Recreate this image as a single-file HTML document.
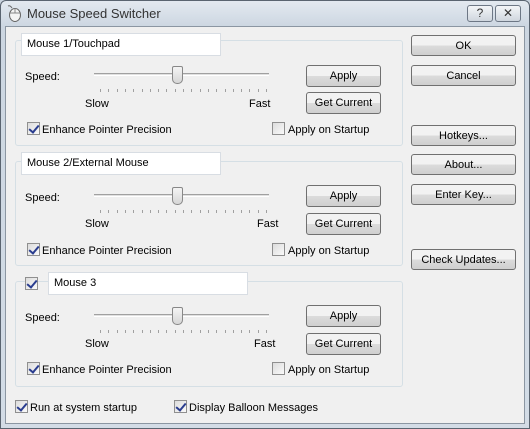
<!DOCTYPE html>
<html><head><style>
*{box-sizing:border-box;margin:0;padding:0}
body{width:530px;height:429px;overflow:hidden;background:#c9d3de;font-family:"Liberation Sans",sans-serif;font-size:11px;color:#000;position:relative}
.a{position:absolute}
.l{margin-top:2px}
.win{left:0;top:0;width:530px;height:429px;border:1px solid #5a6470;border-radius:6px 6px 0 0;background:linear-gradient(#e3e9f0,#ccd6e1 26px,#d3dce6)}
.client{left:5px;top:26px;width:520px;height:398px;background:#f0f0f0;border:1px solid #8b96a2}
.title{left:27px;top:6px;font-size:13px;color:#333}
.grp{border:1px solid #d5dfe5;border-radius:3px}
.tb{background:#fff;border:1px solid #d8dde3;padding:4px 0 0 5px;font-size:11px;height:23px}
.btn{border:1px solid #707070;border-radius:3px;background:linear-gradient(#f2f2f2 50%,#dcdcdc 50%,#cfcfcf);text-align:center;line-height:21px;height:22px}
.cb{width:13px;height:13px;border:1px solid #8f8f8f;background:linear-gradient(135deg,#dcdcdc,#fafafa)}
.cb.on::after{content:"";position:absolute;left:3px;top:0px;width:4px;height:8px;border:solid #2a3d8f;border-width:0 2px 2px 0;transform:rotate(40deg)}
.track{height:3px;border-top:1px solid #a0a0a0;border-bottom:1px solid #fff;background:#e0e0e0}
.thumb{width:11px;height:18px;border:1px solid #888;border-radius:2px 2px 5px 5px;background:linear-gradient(#f4f4f4,#d6d6d6)}
.titlebtn{border:1px solid #6d7785;border-radius:3px;background:linear-gradient(#f3f5f8,#cfd6de);text-align:center;font-size:12px;line-height:15px;color:#333}
</style></head><body>
<div class="a win"></div>
<svg class="a" style="left:7px;top:4px" width="16" height="18" viewBox="0 0 16 18"><ellipse cx="8" cy="11" rx="5.5" ry="6.5" fill="#f4f4f4" stroke="#666"/><path d="M8 4.5 V9 M3 9 H13" stroke="#888" fill="none"/><path d="M5 4 Q3 1 1 2" stroke="#666" fill="none"/></svg>
<div class="a title">Mouse Speed Switcher</div>
<div class="a titlebtn" style="left:467px;top:5px;width:26px;height:17px">?</div>
<div class="a titlebtn" style="left:495px;top:5px;width:26px;height:17px">✕</div>
<div class="a client"></div>

<!-- group 1 -->
<div class="a grp" style="left:15px;top:40px;width:388px;height:106px"></div>
<div class="a tb" style="left:21px;top:33px;width:200px">Mouse 1/Touchpad</div>
<div class="a l" style="left:25px;top:69px">Speed:</div>
<div class="a track" style="left:94px;top:73px;width:175px"></div>
<div class="a thumb" style="left:172px;top:66px"></div>
<div class="a l" style="left:85px;top:96px">Slow</div>
<div class="a l" style="left:249px;top:96px">Fast</div>
<div class="a btn" style="left:306px;top:65px;width:75px">Apply</div>
<div class="a btn" style="left:306px;top:92px;width:75px">Get Current</div>
<div class="a cb on" style="left:27px;top:122px"></div>
<div class="a l" style="left:42px;top:122px">Enhance Pointer Precision</div>
<div class="a cb" style="left:272px;top:122px"></div>
<div class="a l" style="left:288px;top:122px">Apply on Startup</div>

<!-- group 2 -->
<div class="a grp" style="left:15px;top:161px;width:388px;height:105px"></div>
<div class="a tb" style="left:21px;top:152px;width:200px">Mouse 2/External Mouse</div>
<div class="a l" style="left:25px;top:190px">Speed:</div>
<div class="a track" style="left:94px;top:194px;width:175px"></div>
<div class="a thumb" style="left:172px;top:187px"></div>
<div class="a l" style="left:85px;top:216px">Slow</div>
<div class="a l" style="left:257px;top:216px">Fast</div>
<div class="a btn" style="left:306px;top:185px;width:75px">Apply</div>
<div class="a btn" style="left:306px;top:213px;width:75px">Get Current</div>
<div class="a cb on" style="left:27px;top:243px"></div>
<div class="a l" style="left:42px;top:243px">Enhance Pointer Precision</div>
<div class="a cb" style="left:272px;top:243px"></div>
<div class="a l" style="left:288px;top:243px">Apply on Startup</div>

<!-- group 3 -->
<div class="a grp" style="left:15px;top:281px;width:388px;height:106px"></div>
<div class="a cb on" style="left:25px;top:277px"></div>
<div class="a tb" style="left:48px;top:272px;width:200px">Mouse 3</div>
<div class="a l" style="left:25px;top:310px">Speed:</div>
<div class="a track" style="left:94px;top:314px;width:175px"></div>
<div class="a thumb" style="left:172px;top:307px"></div>
<div class="a l" style="left:85px;top:336px">Slow</div>
<div class="a l" style="left:254px;top:336px">Fast</div>
<div class="a btn" style="left:306px;top:305px;width:75px">Apply</div>
<div class="a btn" style="left:306px;top:333px;width:75px">Get Current</div>
<div class="a cb on" style="left:27px;top:362px"></div>
<div class="a l" style="left:42px;top:362px">Enhance Pointer Precision</div>
<div class="a cb" style="left:272px;top:362px"></div>
<div class="a l" style="left:288px;top:362px">Apply on Startup</div>

<svg class="a" style="left:0;top:0" width="530" height="429">
<g stroke="#a0a0a0">
<path d="M100.5 89v3M108.5 89v3M117.5 89v3M125.5 89v3M133.5 89v3M142.5 89v3M150.5 89v3M158.5 89v3M166.5 89v3M175.5 89v3M183.5 89v3M191.5 89v3M200.5 89v3M208.5 89v3M216.5 89v3M225.5 89v3M233.5 89v3M241.5 89v3M249.5 89v3M258.5 89v3M266.5 89v3"/>
<path transform="translate(0,121)" d="M100.5 89v3M108.5 89v3M117.5 89v3M125.5 89v3M133.5 89v3M142.5 89v3M150.5 89v3M158.5 89v3M166.5 89v3M175.5 89v3M183.5 89v3M191.5 89v3M200.5 89v3M208.5 89v3M216.5 89v3M225.5 89v3M233.5 89v3M241.5 89v3M249.5 89v3M258.5 89v3M266.5 89v3"/>
<path transform="translate(0,241)" d="M100.5 89v3M108.5 89v3M117.5 89v3M125.5 89v3M133.5 89v3M142.5 89v3M150.5 89v3M158.5 89v3M166.5 89v3M175.5 89v3M183.5 89v3M191.5 89v3M200.5 89v3M208.5 89v3M216.5 89v3M225.5 89v3M233.5 89v3M241.5 89v3M249.5 89v3M258.5 89v3M266.5 89v3"/>
</g></svg>

<div class="a btn" style="left:411px;top:35px;width:105px;height:21px;line-height:20px">OK</div>
<div class="a btn" style="left:411px;top:65px;width:105px;height:21px;line-height:20px">Cancel</div>
<div class="a btn" style="left:411px;top:125px;width:105px;height:21px;line-height:20px">Hotkeys...</div>
<div class="a btn" style="left:411px;top:154px;width:105px;height:21px;line-height:20px">About...</div>
<div class="a btn" style="left:411px;top:184px;width:105px;height:21px;line-height:20px">Enter Key...</div>
<div class="a btn" style="left:411px;top:249px;width:105px;height:21px;line-height:20px">Check Updates...</div>

<div class="a cb on" style="left:15px;top:400px"></div>
<div class="a l" style="left:30px;top:400px">Run at system startup</div>
<div class="a cb on" style="left:174px;top:400px"></div>
<div class="a l" style="left:189px;top:400px">Display Balloon Messages</div>
</body></html>
